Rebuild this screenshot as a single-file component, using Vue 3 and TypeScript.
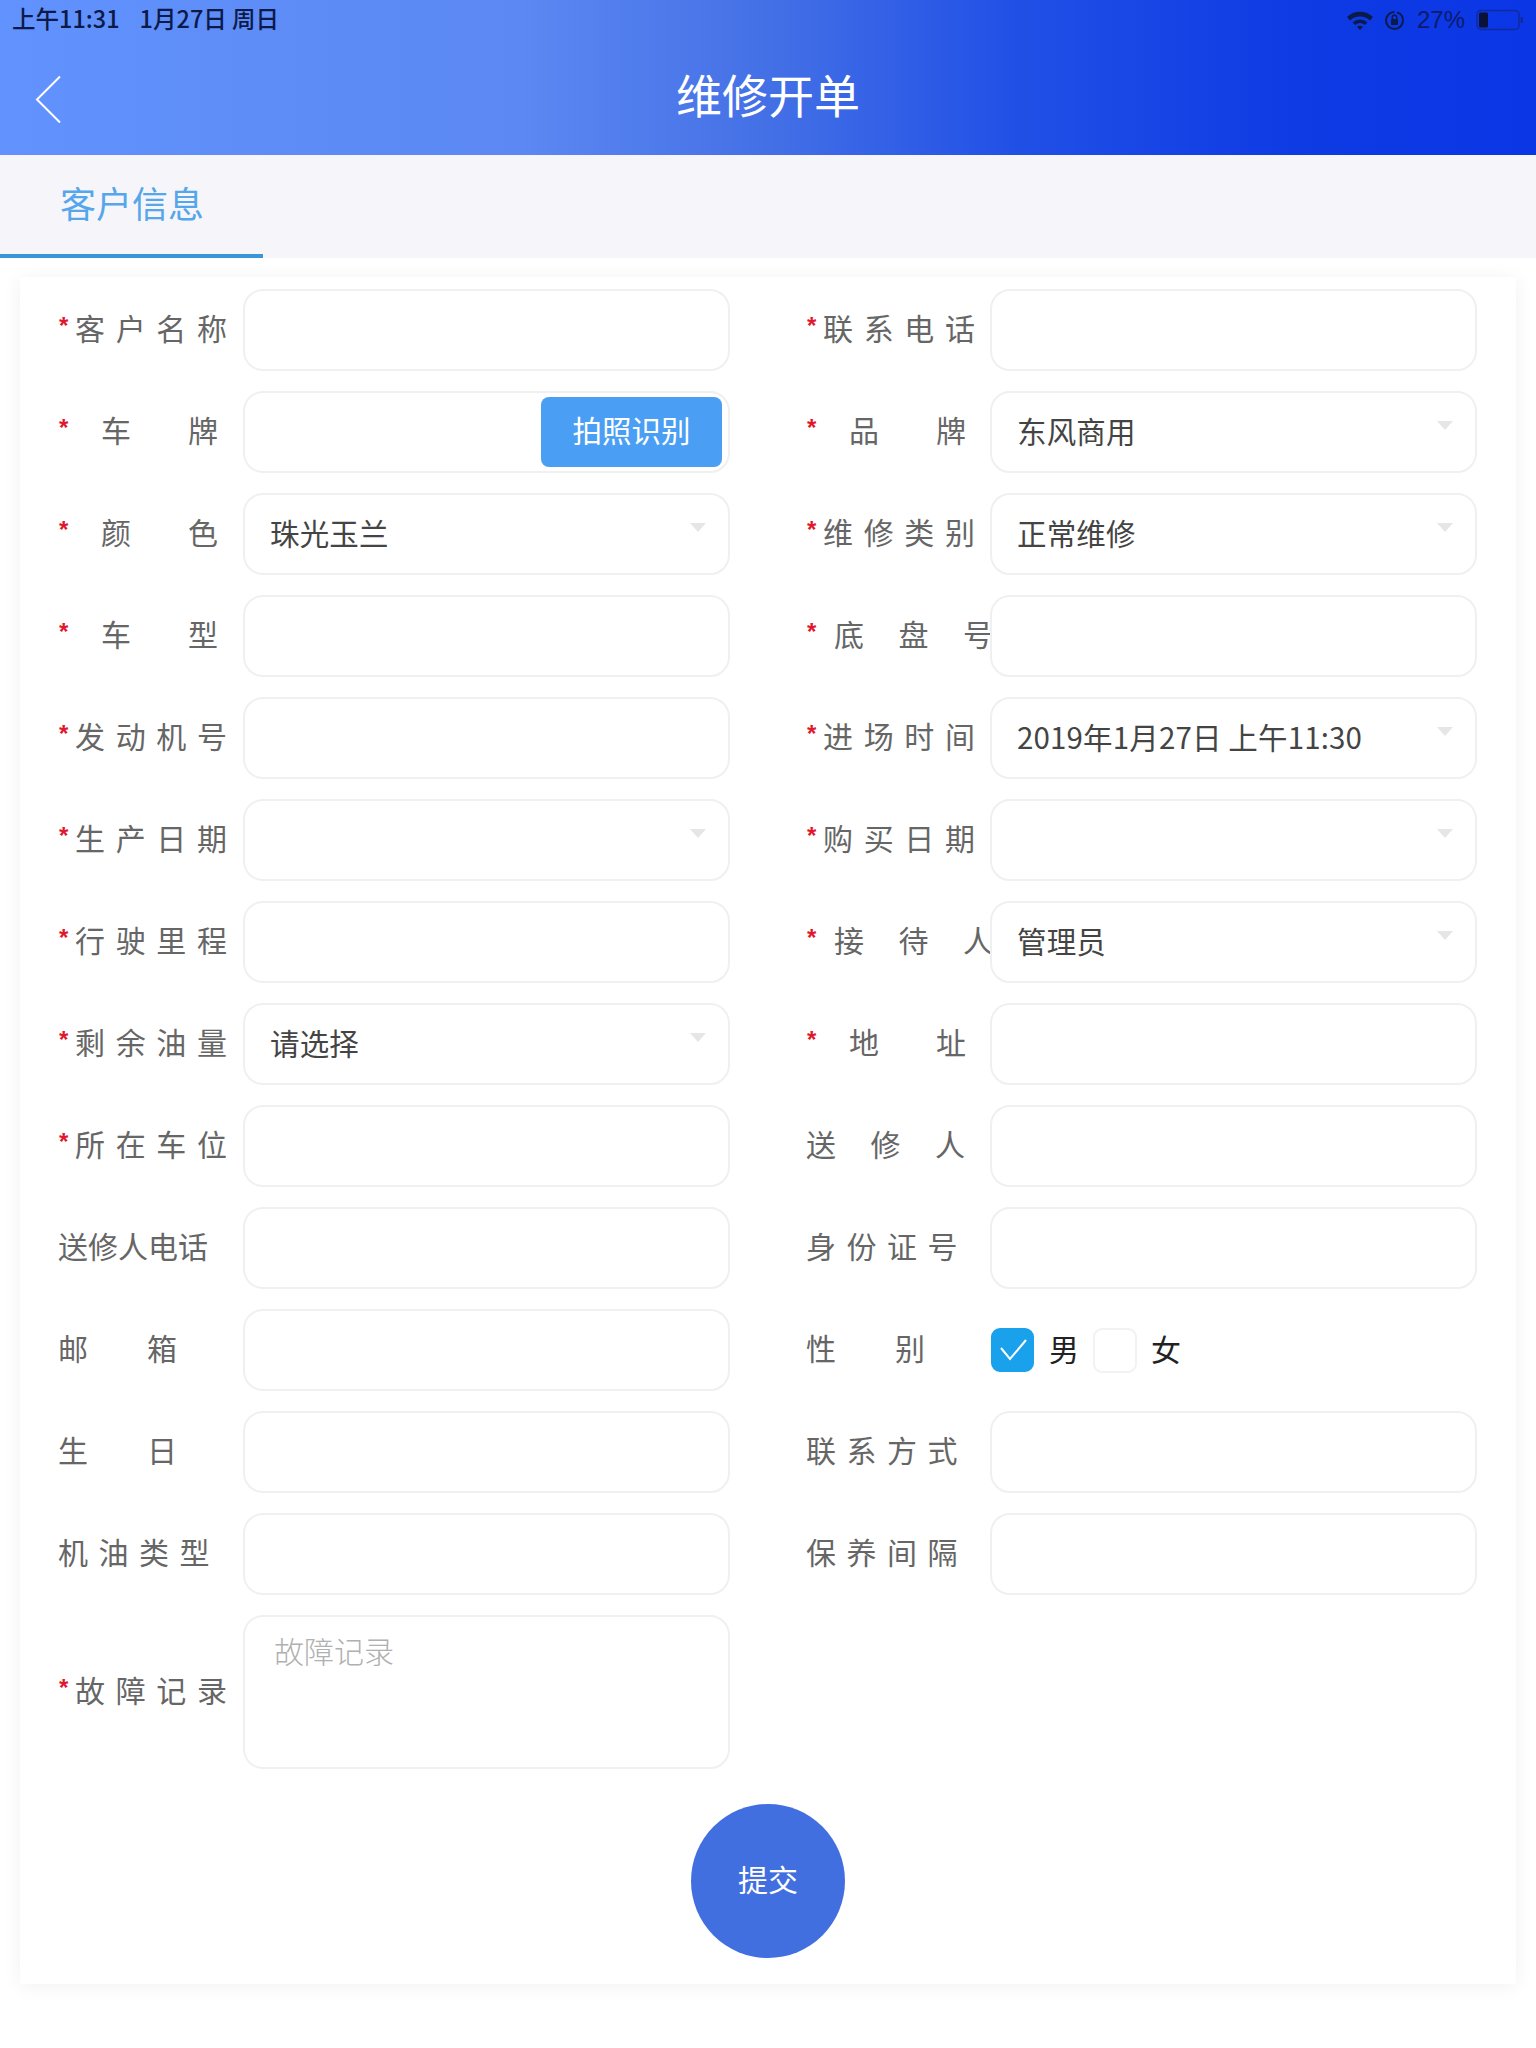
<script setup lang="ts">
type Kind = 'four' | 'two' | 'three' | 'plain4' | 'plain2' | 'plain3' | 'five';
interface Field {
  label: string;
  kind: Kind;
  star: boolean;
  type: 'input' | 'select' | 'photo' | 'gender' | 'area';
  value?: string;
}
const fields: Field[] = [
  { label: '客户名称', kind: 'four', star: true, type: 'input' },
  { label: '联系电话', kind: 'four', star: true, type: 'input' },
  { label: '车牌', kind: 'two', star: true, type: 'photo' },
  { label: '品牌', kind: 'two', star: true, type: 'select', value: '东风商用' },
  { label: '颜色', kind: 'two', star: true, type: 'select', value: '珠光玉兰' },
  { label: '维修类别', kind: 'four', star: true, type: 'select', value: '正常维修' },
  { label: '车型', kind: 'two', star: true, type: 'input' },
  { label: '底盘号', kind: 'three', star: true, type: 'input' },
  { label: '发动机号', kind: 'four', star: true, type: 'input' },
  { label: '进场时间', kind: 'four', star: true, type: 'select', value: '2019年1月27日 上午11:30' },
  { label: '生产日期', kind: 'four', star: true, type: 'select' },
  { label: '购买日期', kind: 'four', star: true, type: 'select' },
  { label: '行驶里程', kind: 'four', star: true, type: 'input' },
  { label: '接待人', kind: 'three', star: true, type: 'select', value: '管理员' },
  { label: '剩余油量', kind: 'four', star: true, type: 'select', value: '请选择' },
  { label: '地址', kind: 'two', star: true, type: 'input' },
  { label: '所在车位', kind: 'four', star: true, type: 'input' },
  { label: '送修人', kind: 'plain3', star: false, type: 'input' },
  { label: '送修人电话', kind: 'five', star: false, type: 'input' },
  { label: '身份证号', kind: 'plain4', star: false, type: 'input' },
  { label: '邮箱', kind: 'plain2', star: false, type: 'input' },
  { label: '性别', kind: 'plain2', star: false, type: 'gender' },
  { label: '生日', kind: 'plain2', star: false, type: 'input' },
  { label: '联系方式', kind: 'plain4', star: false, type: 'input' },
  { label: '机油类型', kind: 'plain4', star: false, type: 'input' },
  { label: '保养间隔', kind: 'plain4', star: false, type: 'input' },
  { label: '故障记录', kind: 'four', star: true, type: 'area' },
];
</script>

<template>
  <div class="page">
    <header class="header">
      <div class="status">
        <div class="status-left">
          <span>上午11:31</span>
          <span>1月27日 周日</span>
        </div>
        <div class="status-right">
          <svg class="wifi" width="28" height="20" viewBox="0 0 28 20">
            <path d="M1 7 A19 19 0 0 1 27 7 L24 10.5 A14.5 14.5 0 0 0 4 10.5 Z" fill="#0c1a4a" />
            <path d="M6.5 12.5 A11 11 0 0 1 21.5 12.5 L18.8 15 A7 7 0 0 0 9.2 15 Z" fill="#0c1a4a" />
            <path d="M11 17 A4 4 0 0 1 17 17 L14 20 Z" fill="#0c1a4a" />
          </svg>
          <svg class="lock" width="21" height="21" viewBox="0 0 21 21">
            <path d="M10.5 2 A8.5 8.5 0 1 0 19 10.5" fill="none" stroke="#0c1a4a" stroke-width="2" />
            <path d="M19 10.5 A8.5 8.5 0 0 0 13 2.4" fill="none" stroke="#0c1a4a" stroke-width="2" />
            <rect x="7" y="9" width="7" height="6" rx="1" fill="#0c1a4a" />
            <path d="M8.3 9 V7.5 a2.2 2.2 0 0 1 4.4 0 V9" fill="none" stroke="#0c1a4a" stroke-width="1.5" />
          </svg>
          <span class="percent">27%</span>
          <svg class="battery" width="48" height="22" viewBox="0 0 48 22">
            <rect x="1" y="1.5" width="42" height="19" rx="4" fill="none" stroke="#102a9c" stroke-width="1.5" />
            <rect x="3" y="3.5" width="9" height="15" rx="1.5" fill="#0a1238" />
            <rect x="44.5" y="8" width="2.5" height="6" rx="1" fill="#102a9c" />
          </svg>
        </div>
      </div>
      <div class="nav">
        <svg class="back" width="27" height="49" viewBox="0 0 27 49">
          <path d="M25 1.5 L2 24.5 L25 47.5" fill="none" stroke="#fff" stroke-width="2" />
        </svg>
        <h1 class="title">维修开单</h1>
      </div>
    </header>

    <nav class="tabs">
      <div class="tab">客户信息</div>
    </nav>

    <main class="card">
      <div class="grid">
        <div v-for="f in fields" :key="f.label" class="field">
          <label class="label" :class="f.kind">
            <span v-if="f.star" class="star">*</span>
            <span class="label-text">{{ f.label }}</span>
          </label>
          <div v-if="f.type === 'input'" class="box"><input class="native" type="text" /></div>
          <div v-else-if="f.type === 'select'" class="box select">
            <span class="value">{{ f.value }}</span>
            <i class="arrow"></i>
          </div>
          <div v-else-if="f.type === 'photo'" class="box photo">
            <input class="native" type="text" />
            <button class="photo-btn" type="button">拍照识别</button>
          </div>
          <div v-else-if="f.type === 'gender'" class="gender">
            <span class="check on">
              <svg width="30" height="24" viewBox="0 0 30 24">
                <path d="M3 10 L12 21 L28 2" fill="none" stroke="#fff" stroke-width="2" />
              </svg>
            </span>
            <span class="g-text g-male">男</span>
            <span class="check"></span>
            <span class="g-text g-female">女</span>
          </div>
          <div v-else class="box area">
            <textarea class="native area-input" placeholder="故障记录"></textarea>
          </div>
        </div>
      </div>
      <div class="actions">
        <button class="submit" type="button">提交</button>
      </div>
    </main>
  </div>
</template>

<style scoped>
.page {
  width: 1536px;
  min-height: 2048px;
  background: #fff;
  font-family: "Noto Sans CJK SC", "Noto Sans", sans-serif;
  overflow: hidden;
}
.header {
  height: 155px;
  box-sizing: border-box;
  background: linear-gradient(90deg, #6192fd 0%, #5b88f2 34%, #4470e6 50%, #2150e6 66%, #0f3be4 84%, #0a36e6 100%);
}
.status {
  height: 40px;
  display: flex;
  justify-content: space-between;
  align-items: center;
  color: #0c1a4a;
  font-size: 23.5px;
  line-height: 36px;
}
.status-left {
  display: flex;
  gap: 20px;
  padding: 0 0 4px 12px;
  font-weight: 500;
}
.status-right {
  display: flex;
  align-items: center;
  padding-right: 12px;
  font-family: "Liberation Sans", sans-serif;
}
.wifi { margin-right: 10px; }
.lock { margin-right: 12px; }
.percent { font-size: 24px; color: #0b1b6b; margin-right: 11px; }
.nav {
  height: 110px;
  display: flex;
  align-items: center;
  justify-content: center;
  position: relative;
}
.back {
  position: absolute;
  left: 35px;
  top: 35px;
}
.title {
  margin: 0;
  font-size: 46px;
  font-weight: 400;
  color: #fff;
  line-height: 60px;
  padding-bottom: 4px;
}
.tabs {
  height: 103px;
  box-sizing: border-box;
  background: #f6f6fa;
}
.tab {
  width: 263px;
  height: 103px;
  box-sizing: border-box;
  padding: 22px 0 0 60px;
  font-size: 36px;
  line-height: 50px;
  color: #55a6ea;
  font-weight: 400;
  border-bottom: 4px solid #3a96da;
}
.card {
  margin: 19px 20px 0;
  height: 1707px;
  box-sizing: border-box;
  padding: 12px 38px 0;
  background: #fff;
  box-shadow: 0 2px 18px rgba(0, 0, 0, 0.06);
}
.grid {
  display: grid;
  grid-template-columns: 672px 672px;
  column-gap: 75px;
  row-gap: 20px;
}
.field {
  display: flex;
  align-items: center;
  min-height: 82px;
}
.label {
  flex: 0 0 185px;
  width: 185px;
  display: flex;
  align-items: center;
  box-sizing: border-box;
  padding-bottom: 6px;
  font-size: 30px;
  line-height: 40px;
  color: #666;
  font-weight: 400;
  position: relative;
}
.field:nth-child(even) .label { padding-left: 1px; }
.field:nth-child(even) .star { left: 2px; }
.star {
  position: absolute;
  left: 1px;
  top: 3px;
  color: #e0182d;
  font-family: "Liberation Sans", sans-serif;
  font-size: 24px;
  font-weight: 700;
  line-height: 32px;
}
.label-text {
  display: block;
  flex: none;
  text-align: justify;
  text-align-last: justify;
  text-justify: inter-character;
}
.four .label-text { margin-left: 17px; width: 152px; }
.two .label-text { margin-left: 43px; width: 117px; }
.three .label-text { margin-left: 28px; width: 159px; }
.plain4 .label-text { width: 151.5px; }
.plain3 .label-text { width: 159px; }
.plain2 .label-text { width: 119px; }
.five .label-text { width: 150px; }
.box {
  width: 487px;
  height: 82px;
  flex: none;
  box-sizing: border-box;
  border: 2px solid #f0f0f0;
  border-radius: 20px;
  background: #fff;
  position: relative;
  display: flex;
  align-items: center;
}
.native {
  width: 100%;
  height: 100%;
  box-sizing: border-box;
  border: 0;
  outline: 0;
  padding: 0 26px;
  background: transparent;
  font: inherit;
}
.select { padding: 0 0 5px 25px; }
.value {
  font-size: 29.5px;
  line-height: 40px;
  color: #444;
  white-space: nowrap;
  letter-spacing: 0.15px;
}
.arrow {
  position: absolute;
  right: 22px;
  top: 28px;
  width: 0;
  height: 0;
  border-left: 8px solid transparent;
  border-right: 8px solid transparent;
  border-top: 9px solid #e6e6e6;
}
.photo-btn {
  position: absolute;
  right: 6px;
  top: 4px;
  width: 181px;
  height: 70px;
  border: 0;
  border-radius: 8px;
  background: #4a9ff5;
  color: #fff;
  font: inherit;
  font-size: 29.5px;
  padding: 0 0 6px;
}
.gender {
  display: flex;
  align-items: center;
  width: 487px;
  height: 82px;
}
.check {
  width: 44px;
  height: 45px;
  flex: none;
  box-sizing: border-box;
  border: 2px solid #f2f2f2;
  border-radius: 9px;
  display: flex;
  align-items: center;
  justify-content: center;
  background: #fff;
}
.check.on {
  width: 43px;
  height: 44px;
  border-color: #1aa1ec;
  background: #1aa1ec;
  margin-left: 1px;
}
.g-text {
  font-size: 30px;
  color: #222;
  line-height: 40px;
  font-weight: 400;
  padding-bottom: 5px;
}
.g-male { margin: 0 14px 0 15px; }
.g-female { margin-left: 14px; }
.area { height: 154px; }
.area-input {
  display: block;
  resize: none;
  padding: 13px 29px 0;
  font-size: 30px;
  line-height: 40px;
  font-weight: 300;
}
.area-input::placeholder { color: #b0b0b0; opacity: 1; }
.actions {
  display: flex;
  justify-content: center;
  margin-top: 35px;
  margin-left: -38px;
  margin-right: -38px;
}
.submit {
  width: 154px;
  height: 154px;
  border: 0;
  border-radius: 50%;
  background: #426fe0;
  color: #fff;
  font: inherit;
  font-size: 30px;
  padding: 0 0 6px;
}
</style>

<style>
html, body { margin: 0; background: #fff; }
</style>
